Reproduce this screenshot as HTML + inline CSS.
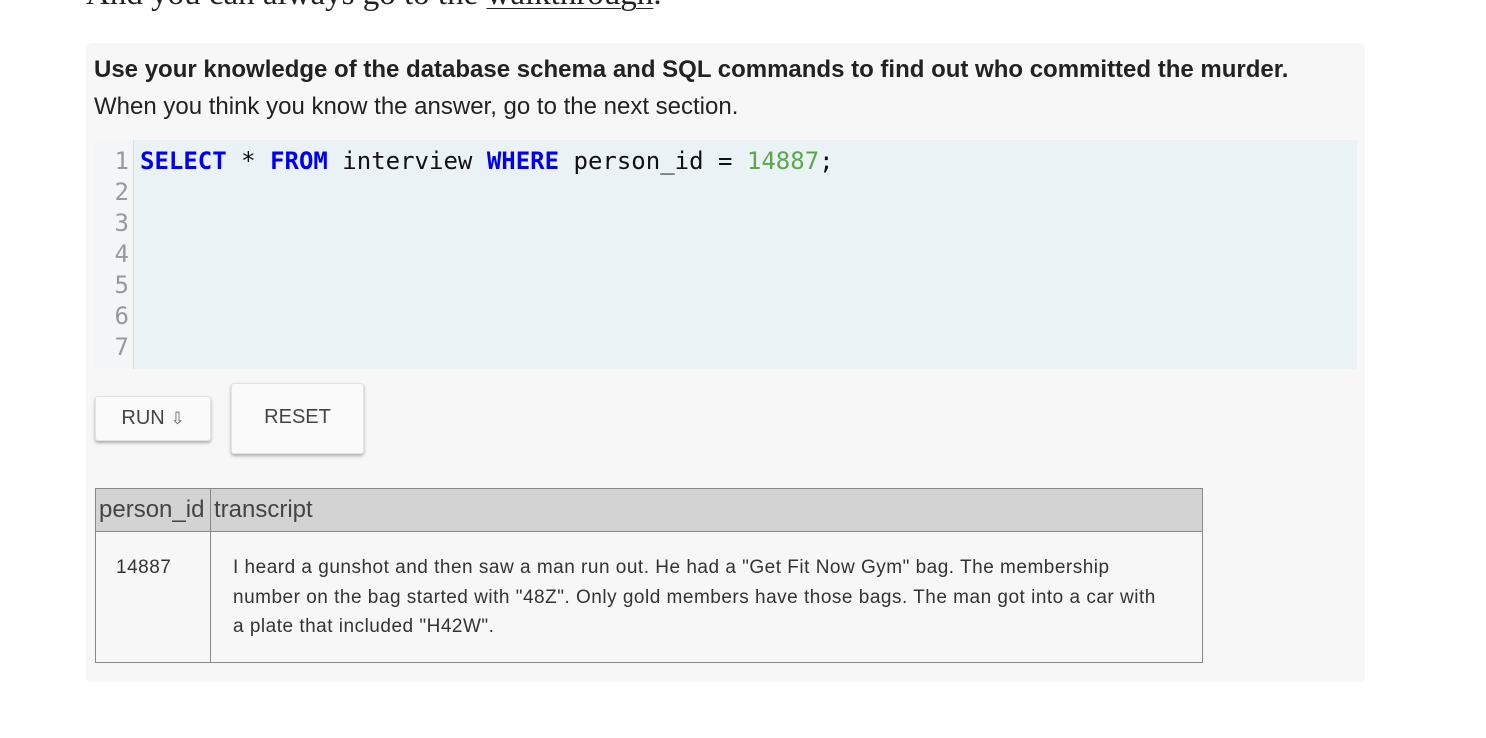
<!DOCTYPE html>
<html><head><style>
body{margin:0;width:1486px;height:738px;background:#fff;position:relative;overflow:hidden;font-family:"Liberation Sans",sans-serif;}
.top{position:absolute;left:86px;top:-24px;font-family:"Liberation Serif",serif;font-size:33px;color:#222;}
.top u{text-decoration-thickness:1px;text-underline-offset:4px}
.box{position:absolute;left:86px;top:43px;width:1279px;height:639px;background:#f7f7f7;border-radius:6px;}
.h{position:absolute;left:94px;top:56px;font-size:24px;font-weight:bold;color:#222;letter-spacing:0px}
.s{position:absolute;left:94px;top:93px;font-size:24px;color:#222;letter-spacing:0px}
.ed{position:absolute;left:95px;top:140px;width:1262px;height:229px;background:#ebf2f6;}
.gut{position:absolute;left:95px;top:140px;width:38px;height:229px;background:#f3f5f6;border-right:1px solid #ddd;}
.ln{position:absolute;left:95px;top:146px;width:34px;text-align:right;font-family:"DejaVu Sans Mono",monospace;font-size:24px;line-height:31px;color:#999;}
.code{position:absolute;left:140px;top:146px;font-family:"DejaVu Sans Mono",monospace;font-size:24px;line-height:31px;color:#111;white-space:pre}
.k{color:#0000ee;font-weight:bold}.n{color:#5aa84a}
.btn{position:absolute;background:#fafafa;border-radius:3px;box-shadow:0 2px 3px rgba(0,0,0,.3);border:1px solid #e2e2e2;font-size:20px;color:#444;text-align:center;}
table{position:absolute;left:95px;top:488px;width:1108px;border-collapse:collapse;font-family:"Liberation Sans",sans-serif;color:#333}
th{background:#d3d3d3;border:1px solid #888;font-weight:normal;font-size:24px;text-align:left;height:42px;padding:0 3px;color:#444}
td{border:1px solid #888;vertical-align:top;font-size:19px;line-height:29.5px;padding:21px 22px 20px;white-space:nowrap;letter-spacing:0.5px}
</style></head><body>
<div class="top">And you can always go to the <u>walkthrough</u>.</div>
<div class="box"></div>
<div class="h">Use your knowledge of the database schema and SQL commands to find out who committed the murder.</div>
<div class="s">When you think you know the answer, go to the next section.</div>
<div class="ed"></div><div class="gut"></div>
<div class="ln">1<br>2<br>3<br>4<br>5<br>6<br>7</div>
<div class="code"><span class="k">SELECT</span> * <span class="k">FROM</span> interview <span class="k">WHERE</span> person_id = <span class="n">14887</span>;</div>
<div class="btn" style="left:95px;top:396px;width:114px;height:43px;line-height:43px">RUN <span style="font-size:17px;color:#666">⇩</span></div>
<div class="btn" style="left:231px;top:383px;width:131px;height:69px;line-height:66px">RESET</div>
<table>
<tr><th style="width:108px">person_id</th><th>transcript</th></tr>
<tr><td style="padding-left:20px">14887</td><td>I heard a gunshot and then saw a man run out. He had a "Get Fit Now Gym" bag. The membership<br>number on the bag started with "48Z". Only gold members have those bags. The man got into a car with<br>a plate that included "H42W".</td></tr>
</table>
</body></html>
